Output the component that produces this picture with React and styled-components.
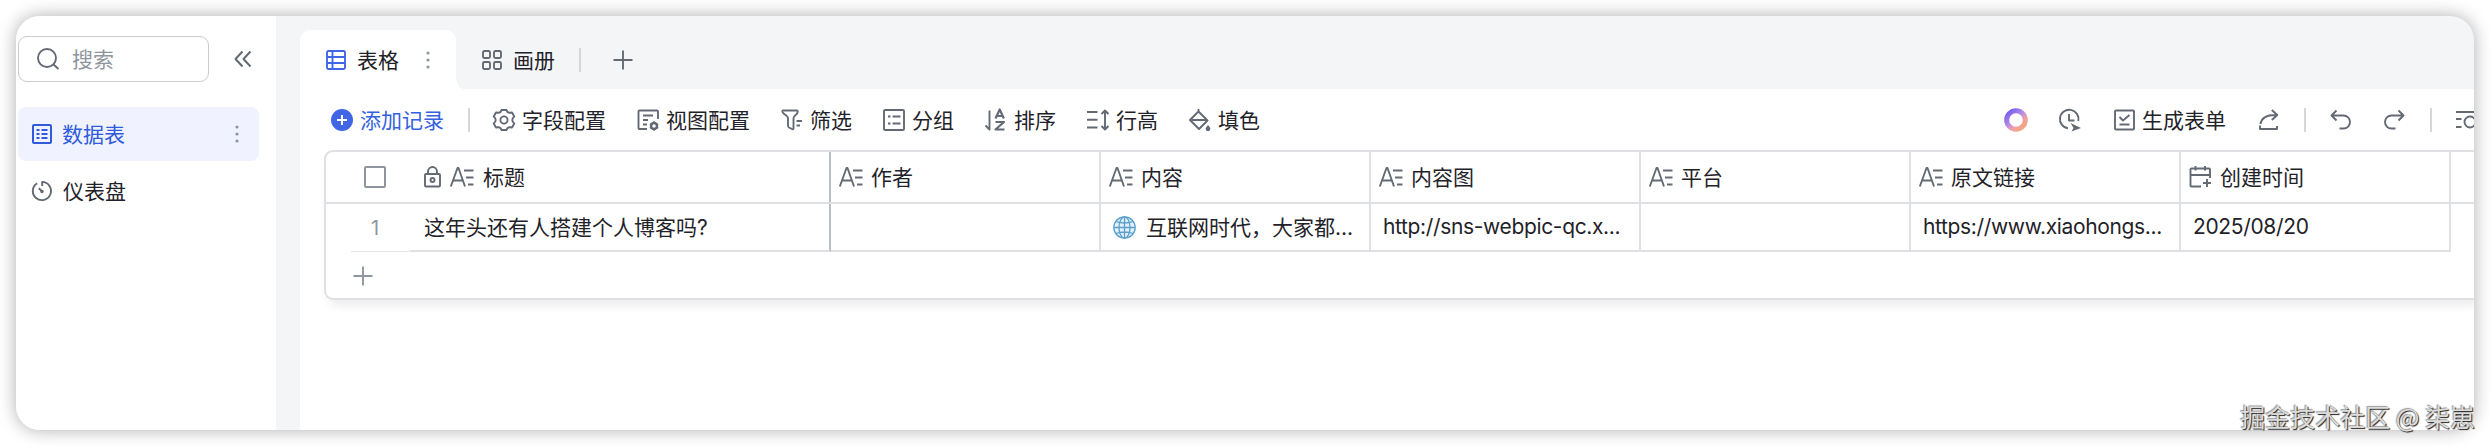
import styled, { createGlobalStyle, css } from 'styled-components';

const GlobalStyle = createGlobalStyle`
  * {
    box-sizing: border-box;
  }

  body {
    margin: 0;
    background: #ffffff;
    font-family: Inter, "Noto Sans CJK SC", sans-serif;
    font-size: 21px;
    color: #1f2329;
  }
`;

const Page = styled.div`
  position: relative;
  height: 446px;
  padding: 16px;
  overflow: hidden;
`;

const Window = styled.div`
  display: flex;
  height: 414px;
  border-radius: 24px;
  background: #f4f5f7;
  box-shadow: 0 0 18px rgba(0, 0, 0, 0.32);
  overflow: hidden;
`;

const Svg = styled.svg`
  display: block;
  flex: none;
  width: ${({ $w }) => $w || 22}px;
  height: ${({ $h }) => $h || 22}px;
  fill: none;
  stroke: ${({ $color }) => $color || '#646a73'};
  stroke-width: ${({ $stroke }) => $stroke || 1.9};
  stroke-linejoin: round;
  overflow: visible;
`;

const Label = styled.span`
  padding-bottom: 2px;
  letter-spacing: ${({ $latin }) => ($latin ? -0.35 : 0)}px;
`;

const Sidebar = styled.aside`
  width: 260px;
  flex: none;
  padding: 20px 0 0 2px;
  background: #ffffff;
`;

const SearchRow = styled.div`
  display: flex;
  align-items: center;
  gap: 25px;
  margin-bottom: 25px;
`;

const SearchBox = styled.div`
  display: flex;
  align-items: center;
  gap: 13px;
  width: 191px;
  height: 46px;
  padding-left: 18px;
  border: 1px solid #c9cbcf;
  border-radius: 9px;
  color: #8f959e;
`;

const MenuItem = styled.div`
  display: flex;
  align-items: center;
  width: 241px;
  height: ${({ $active }) => ($active ? 54 : 60)}px;
  padding: 0 20px 0 14px;
  gap: ${({ $active }) => ($active ? 10 : 11)}px;
  border-radius: 8px;
  color: ${({ $active }) => ($active ? '#2f5bdc' : '#1f2329')};
  background: ${({ $active }) => ($active ? '#f0f3ff' : 'transparent')};
`;

const MenuLabel = styled(Label)`
  flex: 1;
`;

const Main = styled.main`
  flex: 1;
  min-width: 0;
  margin-left: 24px;
`;

const TabBar = styled.div`
  display: flex;
  align-items: flex-end;
  height: 73px;
`;

const Tab = styled.div`
  position: relative;
  display: flex;
  align-items: center;
  height: 59px;
  gap: 11px;
  ${({ $active }) =>
    $active
      ? css`
          width: 156px;
          padding-left: 26px;
          background: #ffffff;
          border-radius: 10px 10px 0 0;

          &::after {
            content: '';
            position: absolute;
            right: -8px;
            bottom: 0;
            width: 8px;
            height: 12px;
            background: radial-gradient(ellipse 8px 12px at 100% 0, transparent 97%, #ffffff 100%);
          }
        `
      : css`
          padding-left: 26px;
          margin-right: 24px;
        `}
`;

const DotsSlot = styled.div`
  margin-left: 16px;
`;

const AddTab = styled.div`
  display: flex;
  align-items: center;
  height: 59px;
  gap: 32px;
`;

const Body = styled.div`
  height: 341px;
  background: #ffffff;
`;

const Toolbar = styled.div`
  display: flex;
  align-items: center;
  height: 61px;
  padding-left: 31px;
  white-space: nowrap;
`;

const Tool = styled.div`
  display: flex;
  flex: none;
  align-items: center;
  gap: 7px;
  margin-right: ${({ $space }) => $space ?? 31}px;
  color: ${({ $primary }) => ($primary ? '#3461e0' : '#1f2329')};
`;

const Divider = styled.div`
  flex: none;
  width: 2px;
  height: 24px;
  margin-right: ${({ $space }) => $space || 0}px;
  background: #d5d7da;
`;

const Spacer = styled.div`
  flex: 1;
`;

const Grid = styled.div`
  margin-left: 24px;
  height: 150px;
  border: 2px solid #dee0e3;
  border-right: none;
  border-radius: 9px 0 0 9px;
  box-shadow: 4px 6px 10px rgba(0, 0, 0, 0.07);
`;

const Row = styled.div`
  display: flex;
  height: ${({ $head }) => ($head ? 52 : 48)}px;
  ${({ $head }) => $head && 'border-bottom: 2px solid #dee0e3;'}
`;

const Cell = styled.div`
  display: flex;
  flex: none;
  align-items: center;
  width: 270px;
  gap: ${({ $head }) => ($head ? 8 : 10)}px;
  padding: ${({ $head }) => ($head ? '0 8px' : '0 8px 0 12px')};
  border-right: 2px solid #dee0e3;
  ${({ $head }) => !$head && 'border-bottom: 2px solid #dee0e3;'}
  white-space: nowrap;
`;

const IndexCell = styled.div`
  display: flex;
  flex: none;
  align-items: center;
  justify-content: center;
  width: ${({ $head }) => ($head ? 84 : 59)}px;
  margin-left: ${({ $head }) => ($head ? 0 : 25)}px;
  padding-left: ${({ $head }) => ($head ? 14 : 0)}px;
  padding-right: ${({ $head }) => ($head ? 0 : 11)}px;
  ${({ $head }) => !$head && 'border-bottom: 1px solid #e4e5e7;'}
  font-size: 20px;
  color: #8f959e;
`;

const TitleCell = styled(Cell)`
  width: 421px;
  padding-left: 14px;
  gap: ${({ $head }) => ($head ? 9 : 10)}px;
  border-right-color: #bbbfc4;
`;

const Checkbox = styled.span`
  width: 22px;
  height: 22px;
  border: 2px solid #8f959e;
  border-radius: 2px;
`;

const AddRow = styled.div`
  display: flex;
  align-items: center;
  height: 48px;
  padding-left: 27px;
`;

const Watermark = styled.div`
  position: absolute;
  right: 15px;
  bottom: 13px;
  font-family: "Noto Sans CJK SC", sans-serif;
  font-size: 25px;
  line-height: 34px;
  white-space: nowrap;
  color: #dcdcdc;
  text-shadow: 1px 1px 1px #222222, -1px -1px 1px #999999;
`;

const Dots = () => (
  <Svg $w={4} $h={18} viewBox="0 0 4 18" $color="none">
    <g fill="#8f959e">
      <circle cx="2" cy="2" r="1.6" />
      <circle cx="2" cy="9" r="1.6" />
      <circle cx="2" cy="16" r="1.6" />
    </g>
  </Svg>
);

const Plus = ({ color }) => (
  <Svg $w={20} $h={20} viewBox="0 0 20 20" $color={color}>
    <path d="M10 .5v19M.5 10h19" />
  </Svg>
);

const SearchIcon = () => (
  <Svg viewBox="0 0 22 22">
    <circle cx="10" cy="10" r="9" />
    <path d="M16.5 16.5l5 4.5" />
  </Svg>
);

const CollapseIcon = () => (
  <Svg $w={18} $h={16} viewBox="0 0 18 16" $stroke={2}>
    <path d="M8.5 .5L1.5 8l7 7.5M16.5 .5L9.5 8l7 7.5" />
  </Svg>
);

const ListIcon = () => (
  <Svg $w={20} $h={20} viewBox="0 0 20 20" $color="#2f5bdc" $stroke={2}>
    <rect x="1" y="1" width="18" height="18" rx="1" />
    <path d="M4.500 6h3M4.500 10h3M4.500 14h3M9.500 6h6M9.500 10h6M9.500 14h6" />
  </Svg>
);

const GroupIcon = () => (
  <Svg viewBox="0 0 22 22">
    <rect x="1" y="1" width="20" height="20" rx="1" />
    <path d="M5 7.500h2.500M5 14.500h2.500M9.500 7.500h8M9.500 14.500h8" />
  </Svg>
);

const GaugeIcon = () => (
  <Svg $w={20} $h={20} viewBox="0 0 20 20">
    <path d="M5.200 2.200a9.100 9.100 0 1 0 5-1.300v4M6.800 7.200l3.200 3" />
    <circle cx="10" cy="10.500" r=".8" />
  </Svg>
);

const TableIcon = () => (
  <Svg $w={20} $h={20} viewBox="0 0 20 20" $color="#4066e6">
    <rect x="1" y="1" width="18" height="18" rx="1.500" />
    <path d="M6.500 1v18M1 7h18M1 13h18" />
  </Svg>
);

const GalleryIcon = () => (
  <Svg $w={20} $h={20} viewBox="0 0 20 20">
    <rect x="1" y="1" width="7" height="7" rx="1.500" />
    <rect x="12" y="1" width="7" height="7" rx="1.500" />
    <rect x="1" y="12" width="7" height="7" rx="1.500" />
    <rect x="12" y="12" width="7" height="7" rx="1.500" />
  </Svg>
);

const AddIcon = () => (
  <Svg viewBox="0 0 22 22" $color="#ffffff" $stroke={2}>
    <circle cx="11" cy="11" r="11" fill="#4066e6" stroke="none" />
    <path d="M11 6v10M6 11h10" />
  </Svg>
);

const GearIcon = () => (
  <Svg viewBox="0 0 22 22">
    <path d="M8.500 1h5q.8 3 3.500 2.800l2-.3 2.300 4q-2 1.500-2 3.500t2 3.500l-2.300 4-2-.3Q14.300 18 13.500 21h-5Q7.700 18 5 18.200l-2 .3-2.300-4q2-1.500 2-3.500t-2-3.500l2.300-4 2 .3Q7.700 4 8.500 1z" />
    <circle cx="11" cy="11" r="3.600" />
  </Svg>
);

const ViewIcon = () => (
  <Svg viewBox="0 0 22 22">
    <path d="M10 20H2.500a1 1 0 0 1-1-1V2.500a1 1 0 0 1 1-1H20a1 1 0 0 1 1 1V10M6 6.500h10M6 11h5M6 15.500h4" />
    <circle cx="17" cy="17" r="3" strokeWidth="2.400" />
    <path d="M17 12.500v2M17 19.500v2M13 14.800l1.800 1M19.300 18.200l1.800 1M21 14.800l-1.800 1M14.800 18.200l-1.800 1" />
  </Svg>
);

const FilterIcon = () => (
  <Svg viewBox="0 0 22 22">
    <path d="M2 1.500h13.500q1.500 0 1.200 1.500-.3 2-2.500 3.500-1.700 1.200-1.700 3v9.500q0 1.800-1.500 1L8 18.500q-1-.7-1-2v-7q0-1.800-1.700-3Q2 4.500 1.500 3q-.3-1.500.5-1.500zM15.500 12h5.500M15.500 16.500h3.500" />
  </Svg>
);

const SortIcon = () => (
  <Svg viewBox="0 0 22 22">
    <path d="M4.500 1.500v19L.5 16.500" />
    <path d="M10.500 9.500l4.200-9 4.200 9M12 7h5.500M10.500 13h8.500l-8.500 7.500h9" strokeWidth="2.200" />
  </Svg>
);

const RowHeightIcon = () => (
  <Svg viewBox="0 0 22 22">
    <path d="M0 3h10.500M0 10.800h10.500M0 18.500h10.500M18 1.500v19M14.500 5L18 1.500 21.500 5M14.500 17l3.500 3.500 3.500-3.500" />
  </Svg>
);

const FillIcon = () => (
  <Svg viewBox="0 0 22 22">
    <path d="M9.500 2.500l9 9-8.500 8.500-9-9zM9.500 2.500V0M1 11h17.500" />
    <path d="M19 16c1.500 1.800 2.400 2.800 2.400 3.800a2.400 2.400 0 0 1-4.800 0c0-1 .9-2 2.400-3.800z" fill="#646a73" stroke="none" />
  </Svg>
);

const RingIcon = () => (
  <Svg $w={24} $h={24} viewBox="0 0 24 24" $color="url(#ring)" $stroke={5}>
    <defs>
      <linearGradient id="ring" x1="0.100" y1="0.100" x2="0.800" y2="0.900">
        <stop offset="0" stopColor="#7d63ee" />
        <stop offset="0.450" stopColor="#b48bea" />
        <stop offset="0.750" stopColor="#f0a0a8" />
        <stop offset="1" stopColor="#f5a482" />
      </linearGradient>
    </defs>
    <circle cx="12" cy="12" r="9.300" />
  </Svg>
);

const ClockIcon = () => (
  <Svg viewBox="0 0 22 22">
    <path d="M9 19.300A9.300 9.300 0 1 1 19.300 12M10 5v6.500h5.500" />
    <path d="M11.500 14l10.500 5-9.500 3.500 2-3.500z" fill="#646a73" stroke="none" />
  </Svg>
);

const FormIcon = () => (
  <Svg $w={21} viewBox="0 0 21 22">
    <rect x="1" y="1.500" width="19" height="19" rx="1" />
    <path d="M5.500 8l3.500 3.500L15.500 6M5.500 15.500h10" />
  </Svg>
);

const ShareIcon = () => (
  <Svg $w={20} viewBox="0 0 20 22">
    <path d="M1.500 15C2.500 9 8 5.500 18 6M12.800 1l5.500 5-5.500 5M1 16.500V20h17v-3" />
  </Svg>
);

const UndoIcon = () => (
  <Svg viewBox="0 0 22 22">
    <path d="M6.500 1.500L1.500 6.500l5 5M1.500 6.500h12a6.500 6.500 0 0 1 0 13H9.500" />
  </Svg>
);

const RedoIcon = () => (
  <Svg viewBox="0 0 22 22">
    <path d="M14.500 1.500l5 5-5 5M19.500 6.500h-12a6.500 6.500 0 0 0 0 13h4" />
  </Svg>
);

const FindIcon = () => (
  <Svg $w={24} viewBox="0 0 24 22">
    <path d="M0 3h22M0 10h5.500M0 18h5.500" />
    <circle cx="14" cy="13" r="5.500" />
    <path d="M18 17l4 4" />
  </Svg>
);

const LockIcon = () => (
  <Svg $w={17} $h={22} viewBox="0 0 17 22">
    <rect x="1" y="8" width="15" height="12.500" rx="1" />
    <path d="M4 8V5.500a4.500 4.500 0 0 1 9 0V8" />
    <circle cx="8.500" cy="14" r="2" />
  </Svg>
);

const TextIcon = () => (
  <Svg $w={24} $h={22} viewBox="0 0 24 22">
    <path d="M.8 20.500L7.500 2h1l6.500 18.500M3.500 14.500h9M14 4.500h9.500M16 11.500h7.500M18 18.500h5.500" />
  </Svg>
);

const DateIcon = () => (
  <Svg $w={23} viewBox="0 0 23 22">
    <path d="M12 20.500H2.500a1 1 0 0 1-1-1V3.500a1 1 0 0 1 1-1H20a1 1 0 0 1 1 1V12M1.500 9H21M6.500 0v4.500M16 0v4.500M18 13v8M14 17h8" />
  </Svg>
);

const GlobeIcon = () => (
  <Svg $w={23} $h={23} viewBox="0 0 23 23" $color="#5c9fcb" $stroke={1.3}>
    <circle cx="11.500" cy="11.500" r="10.700" fill="#dff0fa" />
    <ellipse cx="11.500" cy="11.500" rx="5.500" ry="10.700" />
    <path d="M11.500 1v21M1 11.500h21M3 5.500q8.500 3 17 0M3 17.500q8.500-3 17 0" />
  </Svg>
);

const tools = [
  { label: '字段配置', Icon: GearIcon },
  { label: '视图配置', Icon: ViewIcon },
  { label: '筛选', Icon: FilterIcon },
  { label: '分组', Icon: GroupIcon },
  { label: '排序', Icon: SortIcon },
  { label: '行高', Icon: RowHeightIcon },
  { label: '填色', Icon: FillIcon },
];

const columns = [
  { title: '作者', value: '' },
  { title: '内容', value: '互联网时代，大家都...', globe: true },
  { title: '内容图', value: 'http://sns-webpic-qc.x...', latin: true },
  { title: '平台', value: '' },
  { title: '原文链接', value: 'https://www.xiaohongs...', latin: true },
  { title: '创建时间', value: '2025/08/20', date: true, latin: true },
];

const App = () => {
  return (
    <Page>
      <GlobalStyle />
      <Window>
        <Sidebar>
          <SearchRow>
            <SearchBox>
              <SearchIcon />
              <Label>搜索</Label>
            </SearchBox>
            <CollapseIcon />
          </SearchRow>
          <MenuItem $active>
            <ListIcon />
            <MenuLabel>数据表</MenuLabel>
            <Dots />
          </MenuItem>
          <MenuItem>
            <GaugeIcon />
            <MenuLabel>仪表盘</MenuLabel>
          </MenuItem>
        </Sidebar>
        <Main>
          <TabBar>
            <Tab $active>
              <TableIcon />
              <Label>表格</Label>
              <DotsSlot>
                <Dots />
              </DotsSlot>
            </Tab>
            <Tab>
              <GalleryIcon />
              <Label>画册</Label>
            </Tab>
            <AddTab>
              <Divider />
              <Plus />
            </AddTab>
          </TabBar>
          <Body>
            <Toolbar>
              <Tool $primary $space={24}>
                <AddIcon />
                <Label>添加记录</Label>
              </Tool>
              <Divider $space={23} />
              {tools.map(({ label, Icon }) => (
                <Tool key={label}>
                  <Icon />
                  <Label>{label}</Label>
                </Tool>
              ))}
              <Spacer />
              <Tool $space={31}>
                <RingIcon />
              </Tool>
              <Tool $space={33}>
                <ClockIcon />
              </Tool>
              <Tool $space={33}>
                <FormIcon />
                <Label>生成表单</Label>
              </Tool>
              <Tool $space={25}>
                <ShareIcon />
              </Tool>
              <Divider $space={24} />
              <Tool $space={32}>
                <UndoIcon />
              </Tool>
              <Tool $space={24}>
                <RedoIcon />
              </Tool>
              <Divider $space={24} />
              <Tool $space={-6}>
                <FindIcon />
              </Tool>
            </Toolbar>
            <Grid>
              <Row $head>
                <IndexCell $head>
                  <Checkbox />
                </IndexCell>
                <TitleCell $head>
                  <LockIcon />
                  <TextIcon />
                  <Label>标题</Label>
                </TitleCell>
                {columns.map((column) => (
                  <Cell key={column.title} $head>
                    {column.date ? <DateIcon /> : <TextIcon />}
                    <Label>{column.title}</Label>
                  </Cell>
                ))}
              </Row>
              <Row>
                <IndexCell>1</IndexCell>
                <TitleCell>
                  <Label>这年头还有人搭建个人博客吗?</Label>
                </TitleCell>
                {columns.map((column) => (
                  <Cell key={column.title}>
                    {column.globe && <GlobeIcon />}
                    <Label $latin={column.latin}>{column.value}</Label>
                  </Cell>
                ))}
              </Row>
              <AddRow>
                <Plus color="#8f959e" />
              </AddRow>
            </Grid>
          </Body>
        </Main>
      </Window>
      <Watermark>掘金技术社区 @ 柒崽</Watermark>
    </Page>
  );
};

export default App;
